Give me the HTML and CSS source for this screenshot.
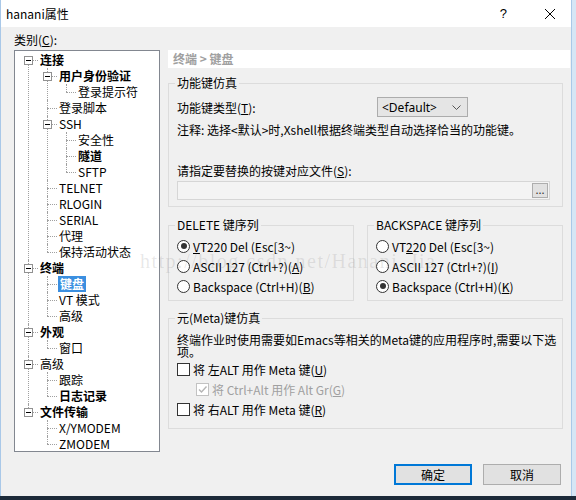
FILE: index.html
```html
<!DOCTYPE html>
<html lang="zh-CN">
<head>
    <meta charset="UTF-8">
    <title>hanani属性</title>
    <link rel="stylesheet" href="styles.css">
</head>
<body>
    <div class="window">
        <div class="titlebar">
            <span class="title">hanani属性</span>
            <span class="help">?</span>
            <svg class="close" width="12" height="12" viewBox="0 0 12 12">
                <path d="M1 1 L11 11 M11 1 L1 11" stroke="#000" stroke-width="1" fill="none"/>
            </svg>
        </div>

        <div class="main">
            <!-- Category tree -->
            <div class="sidebar">
                <div class="cat-label">类别(<u>C</u>):</div>
                <div class="tree">
                    <ul>
                        <li><div class="node"><span class="box"></span><span class="label b">连接</span></div>
                            <ul>
                                <li><div class="node"><span class="box"></span><span class="label b">用户身份验证</span></div>
                                    <ul>
                                        <li><div class="node"><span class="label">登录提示符</span></div></li>
                                    </ul>
                                </li>
                                <li><div class="node"><span class="label">登录脚本</span></div></li>
                                <li><div class="node"><span class="box"></span><span class="label">SSH</span></div>
                                    <ul>
                                        <li><div class="node"><span class="label">安全性</span></div></li>
                                        <li><div class="node"><span class="label b">隧道</span></div></li>
                                        <li><div class="node"><span class="label">SFTP</span></div></li>
                                    </ul>
                                </li>
                                <li><div class="node"><span class="label">TELNET</span></div></li>
                                <li><div class="node"><span class="label">RLOGIN</span></div></li>
                                <li><div class="node"><span class="label">SERIAL</span></div></li>
                                <li><div class="node"><span class="label">代理</span></div></li>
                                <li><div class="node"><span class="label">保持活动状态</span></div></li>
                            </ul>
                        </li>
                        <li><div class="node"><span class="box"></span><span class="label b">终端</span></div>
                            <ul>
                                <li><div class="node"><span class="label b selected">键盘</span></div></li>
                                <li><div class="node"><span class="label">VT 模式</span></div></li>
                                <li><div class="node"><span class="label">高级</span></div></li>
                            </ul>
                        </li>
                        <li><div class="node"><span class="box"></span><span class="label b">外观</span></div>
                            <ul>
                                <li><div class="node"><span class="label">窗口</span></div></li>
                            </ul>
                        </li>
                        <li><div class="node"><span class="box"></span><span class="label">高级</span></div>
                            <ul>
                                <li><div class="node"><span class="label">跟踪</span></div></li>
                                <li><div class="node"><span class="label b">日志记录</span></div></li>
                            </ul>
                        </li>
                        <li><div class="node"><span class="box"></span><span class="label b">文件传输</span></div>
                            <ul>
                                <li><div class="node"><span class="label">X/YMODEM</span></div></li>
                                <li><div class="node"><span class="label">ZMODEM</span></div></li>
                            </ul>
                        </li>
                    </ul>
                </div>
            </div>

            <!-- Settings panel -->
            <div class="panel">
                <div class="crumb">终端 &gt; 键盘</div>

                <fieldset class="group group-fn">
                    <legend>功能键仿真</legend>
                    <div class="row-type">
                        <span class="row-label">功能键类型(<u>T</u>):</span>
                        <div class="select">
                            <span>&lt;Default&gt;</span>
                            <svg width="9" height="5" viewBox="0 0 9 5">
                                <path d="M0.5 0.5 L4.5 4.5 L8.5 0.5" stroke="#555" fill="none"/>
                            </svg>
                        </div>
                    </div>
                    <div class="note">注释: 选择&lt;默认&gt;时,Xshell根据终端类型自动选择恰当的功能键。</div>
                    <div class="file-label">请指定要替换的按键对应文件(<u>S</u>):</div>
                    <div class="file-input">
                        <span class="browse">...</span>
                    </div>
                </fieldset>

                <div class="seq-row">
                    <fieldset class="group group-del">
                        <legend>DELETE 键序列</legend>
                        <div class="opt"><span class="radio on"></span><span><u>V</u>T220 Del (Esc[3~)</span></div>
                        <div class="opt"><span class="radio"></span><span>ASCII 127 (Ctrl+?)(<u>A</u>)</span></div>
                        <div class="opt"><span class="radio"></span><span>Backspace (Ctrl+H)(<u>B</u>)</span></div>
                    </fieldset>
                    <fieldset class="group group-bs">
                        <legend>BACKSPACE 键序列</legend>
                        <div class="opt"><span class="radio"></span><span>VT<u>2</u>20 Del (Esc[3~)</span></div>
                        <div class="opt"><span class="radio"></span><span>ASCII 127 (Ctrl+?)(<u>I</u>)</span></div>
                        <div class="opt"><span class="radio on"></span><span>Backspace (Ctrl+H)(<u>K</u>)</span></div>
                    </fieldset>
                </div>

                <fieldset class="group group-meta">
                    <legend>元(Meta)键仿真</legend>
                    <div class="meta-text"><span class="nowrap">终端作业时使用需要如Emacs等相关的Meta键的应用程序时,需要以下选</span><br>项。</div>
                    <div class="opt"><span class="check"></span><span>将 左ALT 用作 Meta 键(<u>U</u>)</span></div>
                    <div class="opt sub disabled">
                        <span class="check">
                            <svg width="11" height="11" viewBox="0 0 11 11">
                                <path d="M2 5.5 L4.5 8 L9.5 2.5" stroke="#b5b5b5" stroke-width="1.4" fill="none"/>
                            </svg>
                        </span>
                        <span>将 Ctrl+Alt 用作 Alt Gr(<u>G</u>)</span>
                    </div>
                    <div class="opt"><span class="check"></span><span>将 右ALT 用作 Meta 键(<u>R</u>)</span></div>
                </fieldset>
            </div>
        </div>

        <div class="footer">
            <button class="btn default">确定</button>
            <button class="btn">取消</button>
        </div>

        <div class="watermark">http://blog.csdn.net/Hanani_Jia</div>
    </div>
    <div class="desk"></div>
</body>
</html>
```

FILE: styles.css
```css
/* Reset */
body, div, span, ul, li, fieldset, legend, button {
    margin: 0;
    padding: 0;
    box-sizing: border-box;
}

body {
    width: 576px;
    height: 500px;
    overflow: hidden;
    background-color: #d6e6f5;
    font-family: "Noto Sans CJK SC", "Noto Sans", sans-serif;
    font-size: 12px;
    color: #000;
}

u {
    text-decoration: underline;
    text-underline-offset: 1px;
}

/* Window frame */
.window {
    position: relative;
    width: 572px;
    height: 496px;
    background-color: #f0f0f0;
    border-left: 1px solid #a9c8e8;
    border-right: 1px solid #a9c8e8;
    display: flex;
    flex-direction: column;
}

.desk {
    height: 4px;
    background-color: #1c2a39;
}

/* Title bar */
.titlebar {
    height: 27px;
    background-color: #fff;
    display: flex;
    align-items: center;
    padding-left: 5px;
}

.title {
    flex: 1;
    font-size: 12px;
}

.help {
    font-family: "Liberation Sans", sans-serif;
    font-size: 13px;
    margin-right: 37px;
}

.close {
    margin-right: 15px;
}

/* Main area */
.main {
    display: flex;
    padding: 3px 0 0 13px;
}

.sidebar {
    width: 146px;
}

.cat-label {
    height: 20px;
    line-height: 20px;
}

/* Tree */
.tree {
    height: 402px;
    background-color: #fff;
    border: 1px solid #828790;
    padding-top: 1px;
}

.tree ul {
    list-style: none;
}

.tree > ul {
    margin-left: 13px;
}

.tree li ul {
    margin-left: 19px;
}

.tree li {
    position: relative;
}

.tree li::before {
    content: "";
    position: absolute;
    left: 0;
    top: 0;
    bottom: 0;
    border-left: 1px dotted #a0a0a0;
}

.tree > ul > li:first-child::before {
    top: 8px;
}

.tree li:last-child::before {
    bottom: auto;
    height: 8px;
}

.tree li::after {
    content: "";
    position: absolute;
    left: 0;
    top: 8px;
    width: 10px;
    border-top: 1px dotted #a0a0a0;
}

.node {
    position: relative;
    height: 16px;
    line-height: 16px;
    padding-left: 11px;
    display: flex;
    align-items: center;
    white-space: nowrap;
}

.box {
    position: absolute;
    z-index: 1;
    left: -4px;
    top: 4px;
    width: 9px;
    height: 9px;
    border: 1px solid #919191;
    background-color: #fff;
}

.box::after {
    content: "";
    position: absolute;
    left: 1px;
    top: 3px;
    width: 5px;
    height: 1px;
    background-color: #000;
}

.label {
    padding: 0 1px;
}

.label.b {
    font-weight: bold;
}

.label.selected {
    background-color: #3b8fe0;
    color: #fff;
    padding: 0 2px;
}

/* Right panel */
.panel {
    width: 402px;
    margin: 20px 0 0 8px;
}

.crumb {
    height: 18px;
    line-height: 18px;
    background-color: #fff;
    padding-left: 5px;
    color: #a0a0a0;
    font-weight: bold;
}

.group {
    border: 1px solid #dcdcdc;
    padding: 0 6px 6px 8px;
    min-width: 0;
}

.group legend {
    line-height: 16px;
    padding: 0 2px;
    margin-left: -2px;
}

.group-fn {
    width: 395px;
    margin-top: 7px;
}

.row-type {
    display: flex;
    align-items: center;
    height: 20px;
    margin-top: 6px;
}

.row-label {
    width: 200px;
}

.select {
    width: 91px;
    height: 20px;
    background-color: #e5e5e5;
    border: 1px solid #acacac;
    display: flex;
    align-items: center;
    justify-content: space-between;
    padding: 0 6px 0 4px;
    font-family: "Noto Sans", sans-serif;
}

.note {
    margin-top: 5px;
    line-height: 16px;
    white-space: nowrap;
}

.file-label {
    margin-top: 25px;
    line-height: 16px;
}

.file-input {
    margin-top: 2px;
    width: 373px;
    height: 19px;
    background-color: #f4f4f4;
    border: 1px solid #d6d6d6;
    display: flex;
    align-items: center;
    justify-content: flex-end;
    padding-right: 1px;
}

.browse {
    width: 16px;
    height: 15px;
    line-height: 10px;
    text-align: center;
    background-color: #e1e1e1;
    border: 1px solid #adadad;
    font-size: 11px;
    color: #333;
}

/* Key sequence groups */
.seq-row {
    display: flex;
    gap: 13px;
    margin-top: 10px;
}

.group-del {
    width: 186px;
    padding-bottom: 4px;
}

.group-bs {
    width: 196px;
    padding-bottom: 4px;
}

.seq-row legend + .opt {
    margin-top: 3px;
}

.opt {
    height: 20px;
    display: flex;
    align-items: center;
    gap: 3px;
    white-space: nowrap;
}

.radio {
    position: relative;
    width: 13px;
    height: 13px;
    border: 1px solid #333;
    border-radius: 50%;
    background-color: #fff;
    flex-shrink: 0;
}

.radio.on::after {
    content: "";
    position: absolute;
    left: 2.5px;
    top: 2.5px;
    width: 6px;
    height: 6px;
    border-radius: 50%;
    background-color: #333;
}

/* Meta group */
.group-meta {
    width: 395px;
    margin-top: 9px;
    padding-bottom: 9px;
}

.meta-text {
    margin-top: 8px;
    line-height: 12px;
}

.nowrap {
    white-space: nowrap;
}

.group-meta .meta-text + .opt {
    margin-top: 1px;
}

.check {
    width: 13px;
    height: 13px;
    border: 1px solid #333;
    background-color: #fff;
    display: flex;
    align-items: center;
    justify-content: center;
    flex-shrink: 0;
}

.opt.sub {
    padding-left: 19px;
}

.opt.disabled {
    color: #a0a0a0;
}

.opt.disabled .check {
    border-color: #c2c2c2;
}

/* Buttons */
.footer {
    display: flex;
    justify-content: flex-end;
    gap: 11px;
    padding-right: 10px;
    margin-top: 12px;
}

.btn {
    width: 78px;
    height: 21px;
    background-color: #e1e1e1;
    border: 1px solid #adadad;
    font-family: "Noto Sans CJK SC", sans-serif;
    font-size: 12px;
    color: #000;
}

.btn.default {
    border: 2px solid #0078d7;
}

/* Blog watermark over the dialog */
.watermark {
    position: absolute;
    left: 139px;
    top: 250px;
    font-family: "Liberation Serif", serif;
    font-size: 20px;
    letter-spacing: 1.5px;
    color: rgba(110, 110, 110, 0.16);
    pointer-events: none;
}
```
